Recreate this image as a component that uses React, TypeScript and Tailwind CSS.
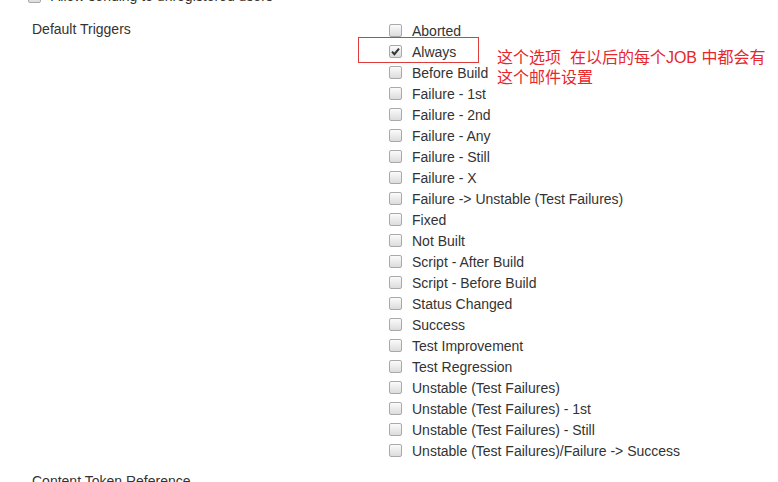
import React from 'react';

const triggers = [
  'Aborted',
  'Always',
  'Before Build',
  'Failure - 1st',
  'Failure - 2nd',
  'Failure - Any',
  'Failure - Still',
  'Failure - X',
  'Failure -> Unstable (Test Failures)',
  'Fixed',
  'Not Built',
  'Script - After Build',
  'Script - Before Build',
  'Status Changed',
  'Success',
  'Test Improvement',
  'Test Regression',
  'Unstable (Test Failures)',
  'Unstable (Test Failures) - 1st',
  'Unstable (Test Failures) - Still',
  'Unstable (Test Failures)/Failure -> Success',
];

const Box = ({checked}: {checked?: boolean}) => (
  <span className="relative inline-block w-[13px] h-[13px] rounded-[2px] border border-[#a9a9a9] bg-gradient-to-b from-[#fbfbfb] to-[#dcdcdc] shrink-0">
    {checked && (
      <svg viewBox="0 0 13 13" className="absolute -left-px -top-px w-[13px] h-[13px]">
        <path d="M3 6.6 L5.4 9.2 L10 3.6" fill="none" stroke="#333" strokeWidth="2" />
      </svg>
    )}
  </span>
);

export default function App() {
  return (
    <div className="relative w-[778px] h-[482px] overflow-hidden bg-white text-[#333] text-[14px] font-['Liberation_Sans',Arial,sans-serif]">
      <div className="-mt-[14px]">
        <div className="flex items-center h-[21px] pl-[28px]">
          <Box />
          <span className="ml-[10px]">Allow sending to unregistered users</span>
        </div>
        <div className="flex pt-[14px]">
          <div className="w-[389px] pl-[32px] leading-[21px] -mt-[2px]">Default Triggers</div>
          <ul>
            {triggers.map((t) => (
              <li key={t} className="flex items-center h-[21px]">
                <span className="-mt-[3px] flex">
                  <Box checked={t === 'Always'} />
                </span>
                <span className="ml-[10px] leading-[21px]">{t}</span>
              </li>
            ))}
          </ul>
        </div>
        <div className="pl-[32px] pt-[9px] leading-[21px]">Content Token Reference</div>
      </div>

      <div className="absolute left-[358px] top-[37px] w-[121px] h-[26px] border border-[#e03c3c]" />
      <div className="absolute left-[497px] top-[48px] text-[16px] leading-[20px] text-[#e8262b] font-['Liberation_Sans','Noto_Sans_CJK_SC',sans-serif] whitespace-pre">
        {'这个选项  在以后的每个JOB 中都会有\n这个邮件设置'}
      </div>
    </div>
  );
}
